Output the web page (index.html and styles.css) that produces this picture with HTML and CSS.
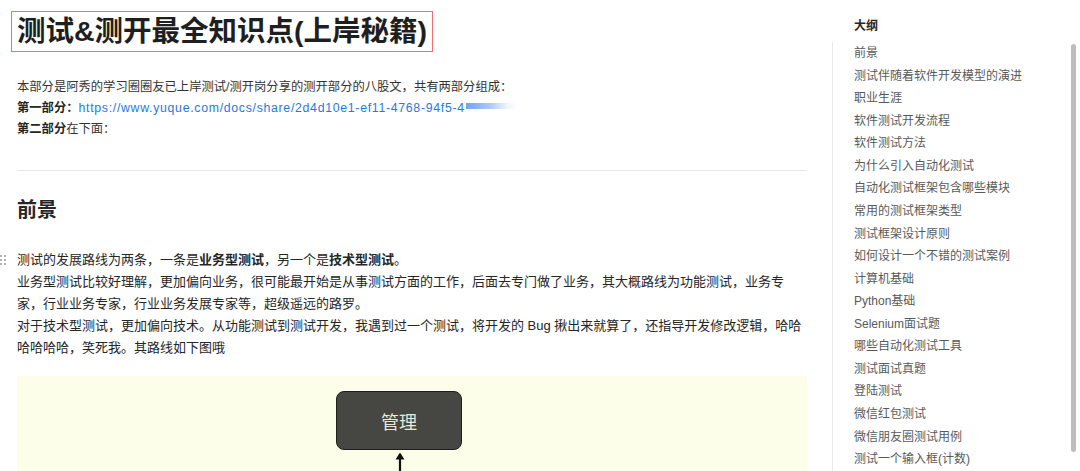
FILE: index.html
```html
<!DOCTYPE html>
<html lang="zh-CN">
<head>
  <meta charset="UTF-8" />
  <meta name="viewport" content="width=device-width, initial-scale=1.0" />
  <title>测试&amp;测开最全知识点(上岸秘籍)</title>
  <link rel="stylesheet" href="styles.css">
</head>

<body>
  <div class="page">
    <main class="doc">
      <h1 class="doc-title">测试&amp;测开最全知识点(上岸秘籍)</h1>

      <div class="intro">
        <p>本部分是阿秀的学习圈圈友已上岸测试/测开岗分享的测开部分的八股文，共有两部分组成：</p>
        <p><strong>第一部分：</strong><a href="#">https://www.yuque.com/docs/share/2d4d10e1-ef11-4768-94f5-4</a><span class="masked"></span></p>
        <p><strong>第二部分</strong>在下面：</p>
      </div>

      <hr>

      <h2>前景</h2>

      <div class="section">
        <span class="drag">
          <svg width="7" height="10" viewBox="0 0 7 10"><g fill="#8c8c8c"><circle cx="1" cy="1" r="0.9"/><circle cx="5" cy="1" r="0.9"/><circle cx="1" cy="5" r="0.9"/><circle cx="5" cy="5" r="0.9"/><circle cx="1" cy="9" r="0.9"/><circle cx="5" cy="9" r="0.9"/></g></svg>
        </span>
        <p>测试的发展路线为两条，一条是<strong>业务型测试</strong>，另一个是<strong>技术型测试</strong>。</p>
        <p>业务型测试比较好理解，更加偏向业务，很可能最开始是从事测试方面的工作，后面去专门做了业务，其大概路线为功能测试，业务专<br>家，行业业务专家，行业业务发展专家等，超级遥远的路罗。</p>
        <p>对于技术型测试，更加偏向技术。从功能测试到测试开发，我遇到过一个测试，将开发的 Bug 揪出来就算了，还指导开发修改逻辑，哈哈<br>哈哈哈哈，笑死我。其路线如下图哦</p>
      </div>

      <div class="diagram">
        <div class="node">管理</div>
        <svg class="arrow" width="14" height="20" viewBox="0 0 14 20">
          <path d="M7 3 L7 20" stroke="#111" stroke-width="2.2" fill="none"/>
          <path d="M2.5 8.5 L7 1.5 L11.5 8.5 Z" fill="#111"/>
        </svg>
      </div>
    </main>

    <aside class="toc">
      <h3>大纲</h3>
      <div class="toc-body">
        <ul>
          <li>前景</li>
          <li>测试伴随着软件开发模型的演进</li>
          <li>职业生涯</li>
          <li>软件测试开发流程</li>
          <li>软件测试方法</li>
          <li>为什么引入自动化测试</li>
          <li>自动化测试框架包含哪些模块</li>
          <li>常用的测试框架类型</li>
          <li>测试框架设计原则</li>
          <li>如何设计一个不错的测试案例</li>
          <li>计算机基础</li>
          <li>Python基础</li>
          <li>Selenium面试题</li>
          <li>哪些自动化测试工具</li>
          <li>测试面试真题</li>
          <li>登陆测试</li>
          <li>微信红包测试</li>
          <li>微信朋友圈测试用例</li>
          <li>测试一个输入框(计数)</li>
        </ul>
        <div class="thumb"></div>
      </div>
    </aside>
  </div>
</body>
</html>
```

FILE: styles.css
```css
:root {
  --text: #262626;
  --text-soft: #585a5a;
  --link: #1f7ae0;
  --line: #e7e9e8;
}

html, body {
  margin: 0;
  height: 471px;
  overflow: hidden;
  background: #fff;
}

body {
  font-family: "Liberation Sans", "Noto Sans CJK SC", sans-serif;
  color: var(--text);
}

.page {
  display: flex;
  height: 100%;
  padding-left: 17px;
}

.doc {
  width: 790px;
  flex-shrink: 0;
  padding-top: 11px;
  display: flex;
  flex-direction: column;
}

.doc-title {
  align-self: flex-start;
  margin: 0 0 0 -6px;
  padding: 0 5px;
  border: 1.5px solid #ee6f75;
  font-size: 28.5px;
  line-height: 39px;
  font-weight: 700;
  color: #1f1f1f;
}

.intro {
  margin-top: 25px;
  font-size: 12.3px;
  line-height: 21px;
  color: #333;
}

.intro p {
  margin: 0;
  white-space: nowrap;
}

.intro strong {
  color: var(--text);
}

.intro a {
  color: var(--link);
  text-decoration: none;
  letter-spacing: 0.7px;
}

.masked {
  display: inline-block;
  width: 52px;
  height: 6px;
  margin-left: 1px;
  vertical-align: 3px;
  background: linear-gradient(90deg, #6fa6ee 0%, #a9c9f4 45%, rgba(220, 233, 250, 0.4) 80%, rgba(255, 255, 255, 0) 100%);
}

hr {
  margin: 30px 0 0;
  border: none;
  border-top: 1px solid var(--line);
}

h2 {
  margin: 25px 0 0;
  font-size: 20px;
  line-height: 28px;
  font-weight: 700;
  color: var(--text);
}

.section {
  position: relative;
  margin-top: 25px;
  font-size: 13px;
  line-height: 22px;
}

.section p {
  margin: 0;
  white-space: nowrap;
}

.drag {
  position: absolute;
  left: -17px;
  top: 6px;
  line-height: 0;
}

.diagram {
  flex: 1;
  margin-top: 17px;
  background: #fdfeea;
  display: flex;
  flex-direction: column;
  padding-top: 15px;
  padding-left: 319px;
}

.node {
  width: 124px;
  height: 57px;
  background: #464642;
  border: 1.5px solid #1e1e1c;
  border-radius: 8px;
  color: #e9e9d6;
  font-size: 18px;
  display: flex;
  align-items: center;
  justify-content: center;
}

.arrow {
  margin: 1px 0 0 57px;
}

.toc {
  width: 248px;
  margin-left: 25px;
  padding-top: 16px;
  display: flex;
  flex-direction: column;
}

.toc h3 {
  margin: 0 0 6px 22px;
  font-size: 12px;
  line-height: 20px;
  font-weight: 700;
  color: var(--text);
}

.toc-body {
  flex: 1;
  display: flex;
  border-left: 1px solid var(--line);
}

.toc ul {
  flex: 1;
  margin: 0;
  padding: 0 0 0 21px;
  list-style: none;
  font-size: 12px;
  line-height: 22.56px;
  color: var(--text-soft);
}

.thumb {
  width: 5px;
  height: 408px;
  margin: 2px 4px 0 0;
  border-radius: 3px;
  background: #bdbdbd;
}
```
